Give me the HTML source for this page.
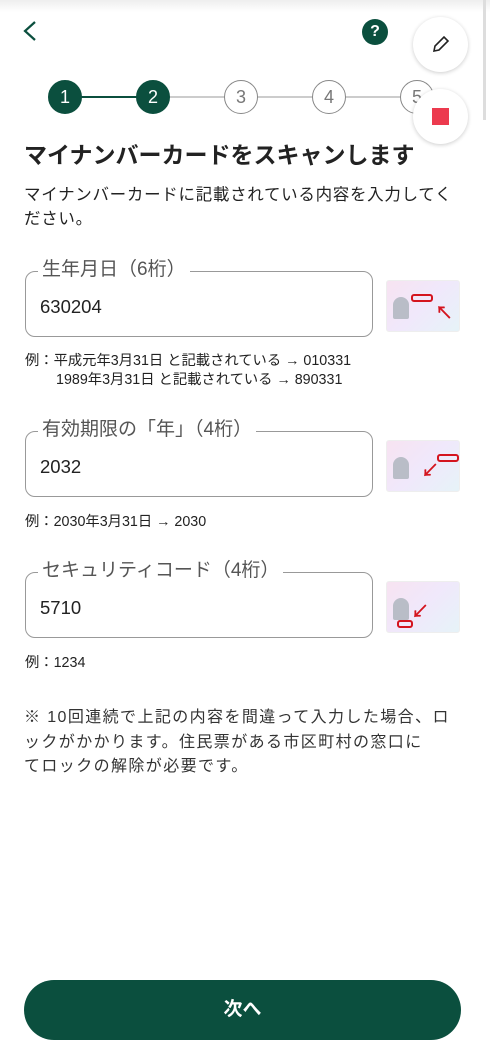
<!DOCTYPE html>
<html><head><meta charset="utf-8"><style>
*{margin:0;padding:0;box-sizing:border-box}
body{width:490px;height:1054px;background:#fff;position:relative;overflow:hidden;font-family:"Liberation Sans","Noto Sans CJK JP",sans-serif;color:#222}
.a{position:absolute;white-space:nowrap}
.box{position:absolute;left:25px;width:348px;height:66px;border:1.3px solid #999;border-radius:10px}
.lbl{position:absolute;left:12px;top:-15px;background:#fff;padding:0 4px;font-size:19px;color:#555;line-height:26px}
.val{position:absolute;left:14px;top:24px;font-size:18.5px;color:#222}
.ex{font-size:14.3px;color:#222;line-height:19px;left:25px}
.card{position:absolute;left:386px;width:74px;height:52px;border-radius:3px;background:linear-gradient(135deg,#f7e3f1,#f0e8fb,#e6f3f8);border:1px solid #eee}
.card .ph{position:absolute;left:6px;top:16px;width:16px;height:22px;background:#b9bdc7;border-radius:8px 8px 2px 2px}
.card .hl{position:absolute;width:22px;height:8px;border:2px solid #d4141e;border-radius:3px}
.card .ar{position:absolute;color:#d4141e;font-size:18px;font-weight:bold;line-height:16px}
.step{position:absolute;top:80px;width:34px;height:34px;border-radius:50%;font-size:18px;text-align:center;line-height:32px}
.on{background:#0b4f3e;color:#fff;border:1px solid #0b4f3e}
.off{background:#fff;color:#777;border:1.3px solid #888}
.fab{position:absolute;left:413px;width:55px;height:55px;border-radius:50%;background:#fff;box-shadow:0 1px 4px rgba(0,0,0,.2)}
</style></head><body>
<div class="a" style="left:0;top:0;width:490px;height:12px;background:linear-gradient(#eee,#fff)"></div>
<svg class="a" style="left:20px;top:20px" width="20" height="22"><path d="M15 2 L5 11 L15 20" fill="none" stroke="#0b4f3e" stroke-width="2.2"/></svg>
<div class="a" style="left:362px;top:19px;width:26px;height:26px;border-radius:50%;background:#0b4f3e;color:#fff;font-weight:bold;font-size:16px;text-align:center;line-height:26px">?</div>
<div class="a" style="left:77px;top:96px;width:340px;height:1.5px;background:#ccc"></div>
<div class="a" style="left:77px;top:96px;width:80px;height:2px;background:#0b4f3e"></div>
<div class="step on" style="left:48px">1</div>
<div class="step on" style="left:136px">2</div>
<div class="step off" style="left:224px">3</div>
<div class="step off" style="left:312px">4</div>
<div class="step off" style="left:400px">5</div>
<div class="fab" style="top:17px"><svg style="position:absolute;left:17px;top:17px" width="21" height="21"><path d="M4 17 L5 12 L14 3 L18 7 L9 16 Z" fill="none" stroke="#222" stroke-width="1.6"/></svg></div>
<div class="fab" style="top:89px"><div style="position:absolute;left:19px;top:19px;width:17px;height:17px;background:#ec3a4e"></div></div>
<div class="a" style="left:483px;top:0;width:3px;height:120px;background:#ddd"></div>
<div class="a" style="left:24px;top:136px;font-size:23px;font-weight:bold;color:#222">マイナンバーカードをスキャンします</div>
<div class="a" style="left:24px;top:183px;font-size:16.5px;line-height:24px;letter-spacing:0.7px">マイナンバーカードに記載されている内容を入力してく<br>ださい。</div>

<div class="box" style="top:271px"><div class="lbl">生年月日（6桁）</div><div class="val">630204</div></div>
<div class="card" style="top:280px"><div class="ph"></div><div class="hl" style="left:24px;top:13px"></div><div class="ar" style="left:48px;top:24px">↖</div></div>
<div class="a ex" style="top:352px">例：平成元年3月31日 と記載されている → 010331<br><span style="padding-left:31px">1989年3月31日 と記載されている → 890331</span></div>

<div class="box" style="top:431px"><div class="lbl">有効期限の「年」（4桁）</div><div class="val">2032</div></div>
<div class="card" style="top:440px"><div class="ph"></div><div class="hl" style="left:50px;top:13px"></div><div class="ar" style="left:34px;top:22px">↙</div></div>
<div class="a ex" style="top:513px">例：2030年3月31日 → 2030</div>

<div class="box" style="top:572px"><div class="lbl">セキュリティコード（4桁）</div><div class="val">5710</div></div>
<div class="card" style="top:581px"><div class="ph"></div><div class="hl" style="left:10px;top:38px;width:16px"></div><div class="ar" style="left:24px;top:22px">↙</div></div>
<div class="a ex" style="top:654px">例：1234</div>

<div class="a" style="left:24px;top:706px;font-size:16px;line-height:24.5px;color:#333;letter-spacing:1.4px">※ 10回連続で上記の内容を間違って入力した場合、ロ<br>ックがかかります。住民票がある市区町村の窓口に<br>てロックの解除が必要です。</div>

<div class="a" style="left:24px;top:980px;width:437px;height:60px;border-radius:30px;background:#0b4f3e;color:#fff;font-size:19px;font-weight:bold;text-align:center;line-height:60px">次へ</div>
</body></html>
